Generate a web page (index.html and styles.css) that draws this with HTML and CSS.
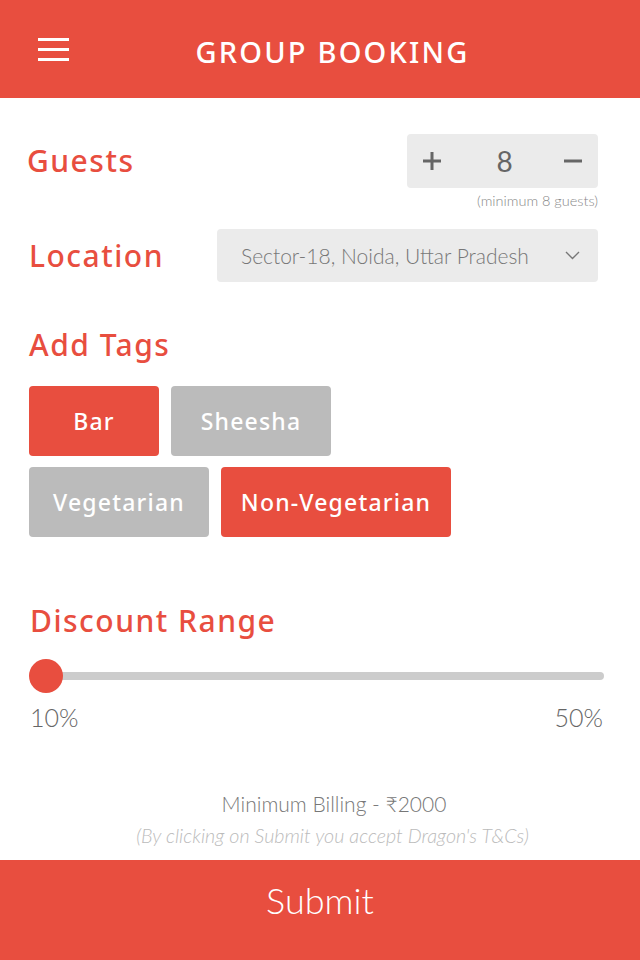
FILE: index.html
```html
<!DOCTYPE html>
<html lang="en">
<head>
<meta charset="utf-8">
<title>Group Booking</title>
<link rel="stylesheet" href="styles.css">
</head>
<body>
<header class="topbar">
  <button class="menu-btn" aria-label="Menu">
    <svg width="31" height="23" viewBox="0 0 31 23"><rect x="0" y="0" width="31" height="3" fill="#fff"/><rect x="0" y="10" width="31" height="3" fill="#fff"/><rect x="0" y="20" width="31" height="3" fill="#fff"/></svg>
  </button>
  <h1 class="topbar-title">GROUP BOOKING</h1>
</header>

<main class="form">
  <div class="row row-guests">
    <span class="label">Guests</span>
    <div class="stepper">
      <span class="stepper-btn">
        <svg width="20" height="20" viewBox="0 0 20 20"><path d="M10 1v18M1 10h18" stroke="#666" stroke-width="3"/></svg>
      </span>
      <span class="stepper-value">8</span>
      <span class="stepper-btn">
        <svg width="20" height="20" viewBox="0 0 20 20"><path d="M1 10h18" stroke="#666" stroke-width="3"/></svg>
      </span>
    </div>
  </div>
  <p class="min-note">(minimum 8 guests)</p>

  <div class="row row-location">
    <span class="label">Location</span>
    <div class="select">
      <span class="select-text">Sector-18, Noida, Uttar Pradesh</span>
      <svg class="chevron" width="15" height="9" viewBox="0 0 15 9"><path d="M1 1l6.5 6.5L14 1" fill="none" stroke="#777" stroke-width="1.4"/></svg>
    </div>
  </div>

  <h2 class="label section-tags">Add Tags</h2>
  <div class="tags">
    <span class="tag tag-on tag-bar">Bar</span>
    <span class="tag tag-off tag-sheesha">Sheesha</span>
    <span class="tag tag-off tag-veg">Vegetarian</span>
    <span class="tag tag-on tag-nonveg">Non-Vegetarian</span>
  </div>

  <h2 class="label section-discount">Discount Range</h2>
  <div class="slider">
    <div class="slider-track"></div>
    <div class="slider-thumb"></div>
  </div>
  <div class="range-labels">
    <span>10%</span>
    <span>50%</span>
  </div>

  <p class="billing">Minimum Billing - ₹2000</p>
  <p class="terms">(By clicking on Submit you accept Dragon's T&amp;Cs)</p>
</main>

<button class="submit">Submit</button>
</body>
</html>
```

FILE: styles.css
```css
* { box-sizing: border-box; }

html, body {
  margin: 0;
  padding: 0;
  background: #fff;
}

body {
  width: 640px;
  height: 960px;
  overflow: hidden;
  font-family: "Lato", "Liberation Sans", sans-serif;
}

.topbar {
  height: 98px;
  background: #e84e3f;
  display: flex;
  align-items: center;
  padding-left: 38px;
}

.menu-btn {
  border: 0;
  padding: 0;
  background: none;
  width: 31px;
  height: 23px;
  display: block;
}
.menu-btn svg { display: block; }

.topbar-title {
  flex: 1;
  margin: 0;
  padding: 4px 44px 0 0;
  text-align: center;
  color: #fff;
  font-family: "Noto Sans", "DejaVu Sans", sans-serif;
  font-weight: 500;
  font-size: 29px;
  letter-spacing: 2.2px;
  line-height: 1;
}

.form {
  padding: 0 42px 0 29px;
}

.label {
  margin: 0;
  color: #e84e3f;
  font-family: "Noto Sans", "DejaVu Sans", sans-serif;
  font-weight: 500;
  font-size: 30px;
  line-height: 36px;
  letter-spacing: 1.5px;
}

.row {
  display: flex;
  justify-content: space-between;
  align-items: center;
}

.row-guests { margin-top: 36px; }
.row-guests .label { margin-left: -2px; }

.stepper {
  width: 191px;
  height: 54px;
  background: #ebebeb;
  border-radius: 4px;
  display: grid;
  grid-template-columns: 50px 1fr 50px;
  align-items: center;
  justify-items: center;
}
.stepper-btn { display: flex; }
.stepper-btn svg { display: block; }
.stepper-value {
  font-family: "Lato", sans-serif;
  font-size: 28px;
  color: #666;
  padding-left: 4px;
}

.min-note {
  margin: 6px 0 0;
  text-align: right;
  font-size: 14.5px;
  line-height: 14px;
  color: #888;
  font-weight: 300;
}

.row-location { margin-top: 21px; }

.select {
  width: 381px;
  height: 53px;
  background: #ebebeb;
  border-radius: 4px;
  display: flex;
  align-items: center;
  justify-content: space-between;
  padding: 0 18px 0 24px;
}
.select-text {
  font-size: 21px;
  color: #777;
  font-weight: 300;
}
.chevron { display: block; }

.section-tags { margin-top: 45px; }

.tags {
  margin-top: 23px;
  display: flex;
  flex-wrap: wrap;
  gap: 11px 12px;
  width: 440px;
}

.tag {
  height: 70px;
  border-radius: 4px;
  display: flex;
  align-items: center;
  justify-content: center;
  color: #fff;
  font-family: "Noto Sans", "DejaVu Sans", sans-serif;
  font-weight: 500;
  font-size: 23px;
  letter-spacing: 1.2px;
}
.tag-on { background: #e84e3f; }
.tag-off { background: #bbbbbb; }
.tag-bar { width: 130px; }
.tag-sheesha { width: 160px; }
.tag-veg { width: 180px; }
.tag-nonveg { width: 230px; }

.section-discount { margin-top: 66px; margin-left: 1px; }

.slider {
  position: relative;
  margin-top: 20px;
  margin-right: -6px;
  height: 34px;
}
.slider-track {
  position: absolute;
  left: 16px;
  right: 0;
  top: 13px;
  height: 8px;
  background: #cccccc;
  border-radius: 4px;
}
.slider-thumb {
  position: absolute;
  left: 0;
  top: 0;
  width: 34px;
  height: 34px;
  border-radius: 50%;
  background: #e84e3f;
}

.range-labels {
  margin-top: 11px;
  margin-right: -5px;
  display: flex;
  justify-content: space-between;
  font-size: 25px;
  line-height: 26px;
  color: #666;
  font-weight: 300;
  padding-left: 1px;
}

.billing {
  margin: 62px 0 0;
  text-align: center;
  font-size: 21px;
  line-height: 24px;
  color: #777;
  font-weight: 300;
  padding-left: 41px;
}

.terms {
  margin: 9px 0 0;
  text-align: center;
  font-size: 19.7px;
  line-height: 22px;
  color: #bbb;
  font-style: italic;
  font-weight: 300;
  padding-left: 38px;
}

.submit {
  display: flex;
  align-items: center;
  justify-content: center;
  margin-top: 13px;
  width: 640px;
  height: 100px;
  border: 0;
  background: #e84e3f;
  color: #fff;
  font-family: "Lato", sans-serif;
  font-weight: 300;
  font-size: 36px;
  padding: 0 0 20px;
}
```
